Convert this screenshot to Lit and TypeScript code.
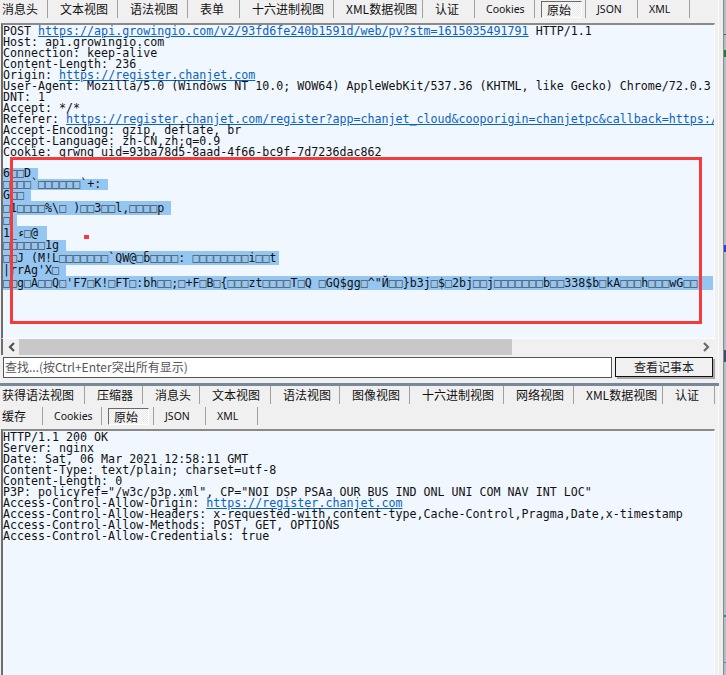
import { LitElement, html, css } from "lit";
import { customElement } from "lit/decorators.js";

type Tab = { label: string; w: number; latin?: boolean; active?: boolean };

const row1: Tab[] = [
  { label: "消息头", w: 48 },
  { label: "文本视图", w: 70 },
  { label: "语法视图", w: 70 },
  { label: "表单", w: 52 },
  { label: "十六进制视图", w: 94 },
  { label: "XML数据视图", w: 89 },
  { label: "认证", w: 52 },
  { label: "Cookies", w: 60, latin: true },
  { label: "原始", w: 51, active: true },
  { label: "JSON", w: 52, latin: true },
  { label: "XML", w: 52, latin: true },
];
const row2: Tab[] = [
  { label: "获得语法视图", w: 85 },
  { label: "压缩器", w: 58 },
  { label: "消息头", w: 57 },
  { label: "文本视图", w: 71 },
  { label: "语法视图", w: 69 },
  { label: "图像视图", w: 70 },
  { label: "十六进制视图", w: 94 },
  { label: "网络视图", w: 70 },
  { label: "XML数据视图", w: 89 },
  { label: "认证", w: 52 },
];
const row3: Tab[] = [
  { label: "缓存", w: 43 },
  { label: "Cookies", w: 59, latin: true },
  { label: "原始", w: 52, active: true },
  { label: "JSON", w: 52, latin: true },
  { label: "XML", w: 52, latin: true },
];

const B = "□";
const sel: { t: string; w: number; h: number }[] = [
  { t: `6${B}${B}D`, w: 35, h: 11 },
  { t: `${B}${B}${B}${B}\`${B}${B}${B}${B}${B}${B}\`+:`, w: 105, h: 11 },
  { t: `G${B}${B}`, w: 28, h: 11 },
  { t: `${B}1${B}${B}${B}${B}%\\${B} )${B}${B}3${B}${B}l,${B}${B}${B}${B}p`, w: 168, h: 14 },
  { t: `${B}`, w: 14, h: 11 },
  { t: `1_ء${B}@`, w: 44, h: 14 },
  { t: `${B}${B}${B}${B}${B}${B}1g`, w: 63, h: 11 },
  { t: `${B}${B}J (M!L${B}${B}${B}${B}${B}${B}${B}\`QW@${B}b̄${B}${B}${B}${B}: ${B}${B}${B}${B}${B}${B}${B}${B}i${B}${B}t`, w: 276, h: 14 },
  { t: `|rrAg'X${B}`, w: 63, h: 11 },
  {
    t: `${B}${B}g${B}A${B}${B}Q${B}'F7${B}K!${B}FT${B}:bh${B}${B};${B}+F${B}B${B}{${B}${B}${B}zt${B}${B}${B}${B}T${B}Q ${B}GQ$gg${B}^"Й${B}${B}}b3j${B}$${B}2bj${B}${B}j${B}${B}${B}${B}${B}${B}${B}b${B}${B}338$b${B}kA${B}${B}${B}h${B}${B}${B}wG${B}${B}`,
    w: 710,
    h: 14,
  },
];

const marks = [
  { y: 34, h: 1, c: "#1f7a2a" },
  { y: 50, h: 7, c: "#1f7a2a" },
  { y: 245, h: 7, c: "#2a3fd0" },
  { y: 350, h: 12, c: "#34507a" },
  { y: 615, h: 2, c: "#1f8f9a" },
  { y: 662, h: 1, c: "#2a9ad0" },
];

@customElement("app-root")
export class AppRoot extends LitElement {
  static styles = css`
    :host {
      display: block;
      position: relative;
      width: 726px;
      height: 675px;
      overflow: hidden;
      background: #f0f0f0;
      font-family: "Noto Sans CJK SC", "Noto Sans", sans-serif;
      color: #111;
    }
    .shell { display: flex; height: 675px; }
    .page {
      flex: none;
      width: 718px;
      height: 675px;
      display: flex;
      flex-direction: column;
    }
    .rule { flex: none; width: 1px; background: #fbfbfb; }
    .gap { flex: none; width: 4px; background: #ededed; }
    .edge { flex: none; width: 1px; background: #8a8a8a; }
    .desk { flex: 1; background: #b4bec8; position: relative; }
    .desk i { position: absolute; left: 0; width: 2px; display: block; }
    .tabs {
      display: flex;
      flex: none;
      align-items: flex-start;
      font-size: 12px;
      line-height: 18px;
    }
    .tabs.first { height: 23px; }
    .tabs.second { height: 21px; }
    .tabs.third { height: 22px; }
    .tab {
      flex: none;
      box-sizing: border-box;
      height: 18px;
      padding-left: 12px;
      border-right: 1px solid #a0a0a0;
      white-space: nowrap;
      position: relative;
    }
    .tab:first-child { padding-left: 2px; }
    .tab.latin { font-family: "Noto Sans", sans-serif; font-size: 10.5px; padding-left: 11px; }
    .tab.active .on {
      position: absolute;
      left: 6px;
      width: 41px;
      top: 1px;
      height: 17px;
      box-sizing: border-box;
      border: 1px solid #6a6a6a;
      border-right-color: #fff;
      border-bottom-color: #fff;
      background: repeating-conic-gradient(#fff 0 25%, #e6e6e6 0 50%) 0 0 / 2px 2px;
      line-height: 15px;
      padding-left: 5px;
    }
    .box {
      box-sizing: border-box;
      margin-left: 1px;
      width: 714px;
      background: #f0f7ff;
      border-top: 2px solid #8a8a8a;
      border-left: 2px solid #6e6e6e;
      border-right: 1px solid #fbfbfb;
      overflow: hidden;
      flex: none;
    }
    .req { height: 316px; }
    .res { height: 246px; }
    pre {
      margin: 0;
      font-family: "DejaVu Sans Mono", monospace;
      font-size: 11.65px;
      line-height: 11px;
      color: #111;
      white-space: pre;
    }
    pre.head { box-sizing: border-box; height: 143px; padding-top: 1px; }
    pre.body { padding-top: 1px; }
    a { color: #0b62c4; text-decoration: underline; }
    .sel {
      display: block;
      background: #95c6f1;
    }
    .bx { color: #4a5560; }
    .scroll {
      flex: none;
      display: flex;
      align-items: stretch;
      margin-left: 1px;
      width: 713px;
      box-sizing: border-box;
      height: 17px;
      background: #f0f0f0;
      margin-top: -1px;
      border-top: 1px solid #fff;
      border-left: 2px solid #6e6e6e;
    }
    .arrow { flex: none; width: 16px; display: flex; align-items: center; justify-content: center; }
    .thumb { flex: none; width: 493px; background: #c8c8c8; }
    .track { flex: 1; }
    .search {
      flex: none;
      display: flex;
      gap: 3px;
      padding: 2px 0 0 3px;
      height: 28px;
      box-sizing: border-box;
    }
    .input {
      box-sizing: border-box;
      width: 609px;
      height: 21px;
      background: #fff;
      border: 1px solid #555;
      font-size: 12px;
      line-height: 18px;
      color: #555;
      padding-left: 1px;
      white-space: nowrap;
    }
    .btn {
      box-sizing: border-box;
      width: 98px;
      height: 20px;
      background: #f0f0f0;
      border: 1px solid #111;
      box-shadow: 2px 2px 0 #a8a8a8;
      font-size: 12px;
      line-height: 18px;
      text-align: center;
      color: #222;
    }
    .split { flex: none; height: 3px; background: #778899; width: 719px; position: relative; z-index: 1; }
    .mark {
      position: absolute;
      left: 10px;
      top: 157px;
      width: 692px;
      height: 167px;
      box-sizing: border-box;
      border: 3px solid #f83a3a;
      pointer-events: none;
    }
    .dot {
      position: absolute;
      left: 84px;
      top: 235px;
      width: 5px;
      height: 4px;
      background: #f83a3a;
    }
  `;

  private tabs(list: Tab[], cls: string) {
    return html`<div class="tabs ${cls}">
      ${list.map(
        (t) => html`<div class="tab ${t.latin ? "latin" : ""} ${t.active ? "active" : ""}" style="width:${t.w}px">
          ${t.active ? html`<div class="on">${t.label}</div>` : t.label}
        </div>`
      )}
    </div>`;
  }

  private boxed(t: string) {
    return t.split(B).map((part, i) => (i === 0 ? part : html`<span class="bx">${B}</span>${part}`));
  }

  render() {
    return html`
      <div class="shell">
        <div class="page">
          ${this.tabs(row1, "first")}
          <div class="box req">
            <pre class="head">POST <a>https://api.growingio.com/v2/93fd6fe240b1591d/web/pv?stm=1615035491791</a> HTTP/1.1
Host: api.growingio.com
Connection: keep-alive
Content-Length: 236
Origin: <a>https://register.chanjet.com</a>
User-Agent: Mozilla/5.0 (Windows NT 10.0; WOW64) AppleWebKit/537.36 (KHTML, like Gecko) Chrome/72.0.3
DNT: 1
Accept: */*
Referer: <a>https://register.chanjet.com/register?app=chanjet_cloud&cooporigin=chanjetpc&callback=https:/</a>
Accept-Encoding: gzip, deflate, br
Accept-Language: zh-CN,zh;q=0.9
Cookie: grwng_uid=93ba78d5-8aad-4f66-bc9f-7d7236dac862</pre>
            ${sel.map(
              (s) => html`<pre class="sel" style="width:${s.w}px;height:${s.h}px;line-height:${s.h}px">${this.boxed(s.t)}</pre>`
            )}
          </div>
          <div class="scroll">
            <div class="arrow">
              <svg width="9" height="10" viewBox="0 0 9 10"><path d="M7 1 L3 5 L7 9" fill="none" stroke="#505050" stroke-width="2.2"/></svg>
            </div>
            <div class="thumb"></div>
            <div class="track"></div>
            <div class="arrow">
              <svg width="9" height="10" viewBox="0 0 9 10"><path d="M2 1 L6 5 L2 9" fill="none" stroke="#6a6a6a" stroke-width="2.2"/></svg>
            </div>
          </div>
          <div class="search">
            <div class="input">查找...(按Ctrl+Enter突出所有显示)</div>
            <div class="btn">查看记事本</div>
          </div>
          <div class="split"></div>
          ${this.tabs(row2, "second")}
          ${this.tabs(row3, "third")}
          <div class="box res">
            <pre class="body">HTTP/1.1 200 OK
Server: nginx
Date: Sat, 06 Mar 2021 12:58:11 GMT
Content-Type: text/plain; charset=utf-8
Content-Length: 0
P3P: policyref="/w3c/p3p.xml", CP="NOI DSP PSAa OUR BUS IND ONL UNI COM NAV INT LOC"
Access-Control-Allow-Origin: <a>https://register.chanjet.com</a>
Access-Control-Allow-Headers: x-requested-with,content-type,Cache-Control,Pragma,Date,x-timestamp
Access-Control-Allow-Methods: POST, GET, OPTIONS
Access-Control-Allow-Credentials: true</pre>
          </div>
        </div>
        <div class="rule"></div>
        <div class="gap"></div>
        <div class="edge"></div>
        <div class="desk">
          ${marks.map((m) => html`<i style="top:${m.y}px;height:${m.h}px;background:${m.c}"></i>`)}
        </div>
      </div>
      <div class="mark"></div>
      <div class="dot"></div>
    `;
  }
}
